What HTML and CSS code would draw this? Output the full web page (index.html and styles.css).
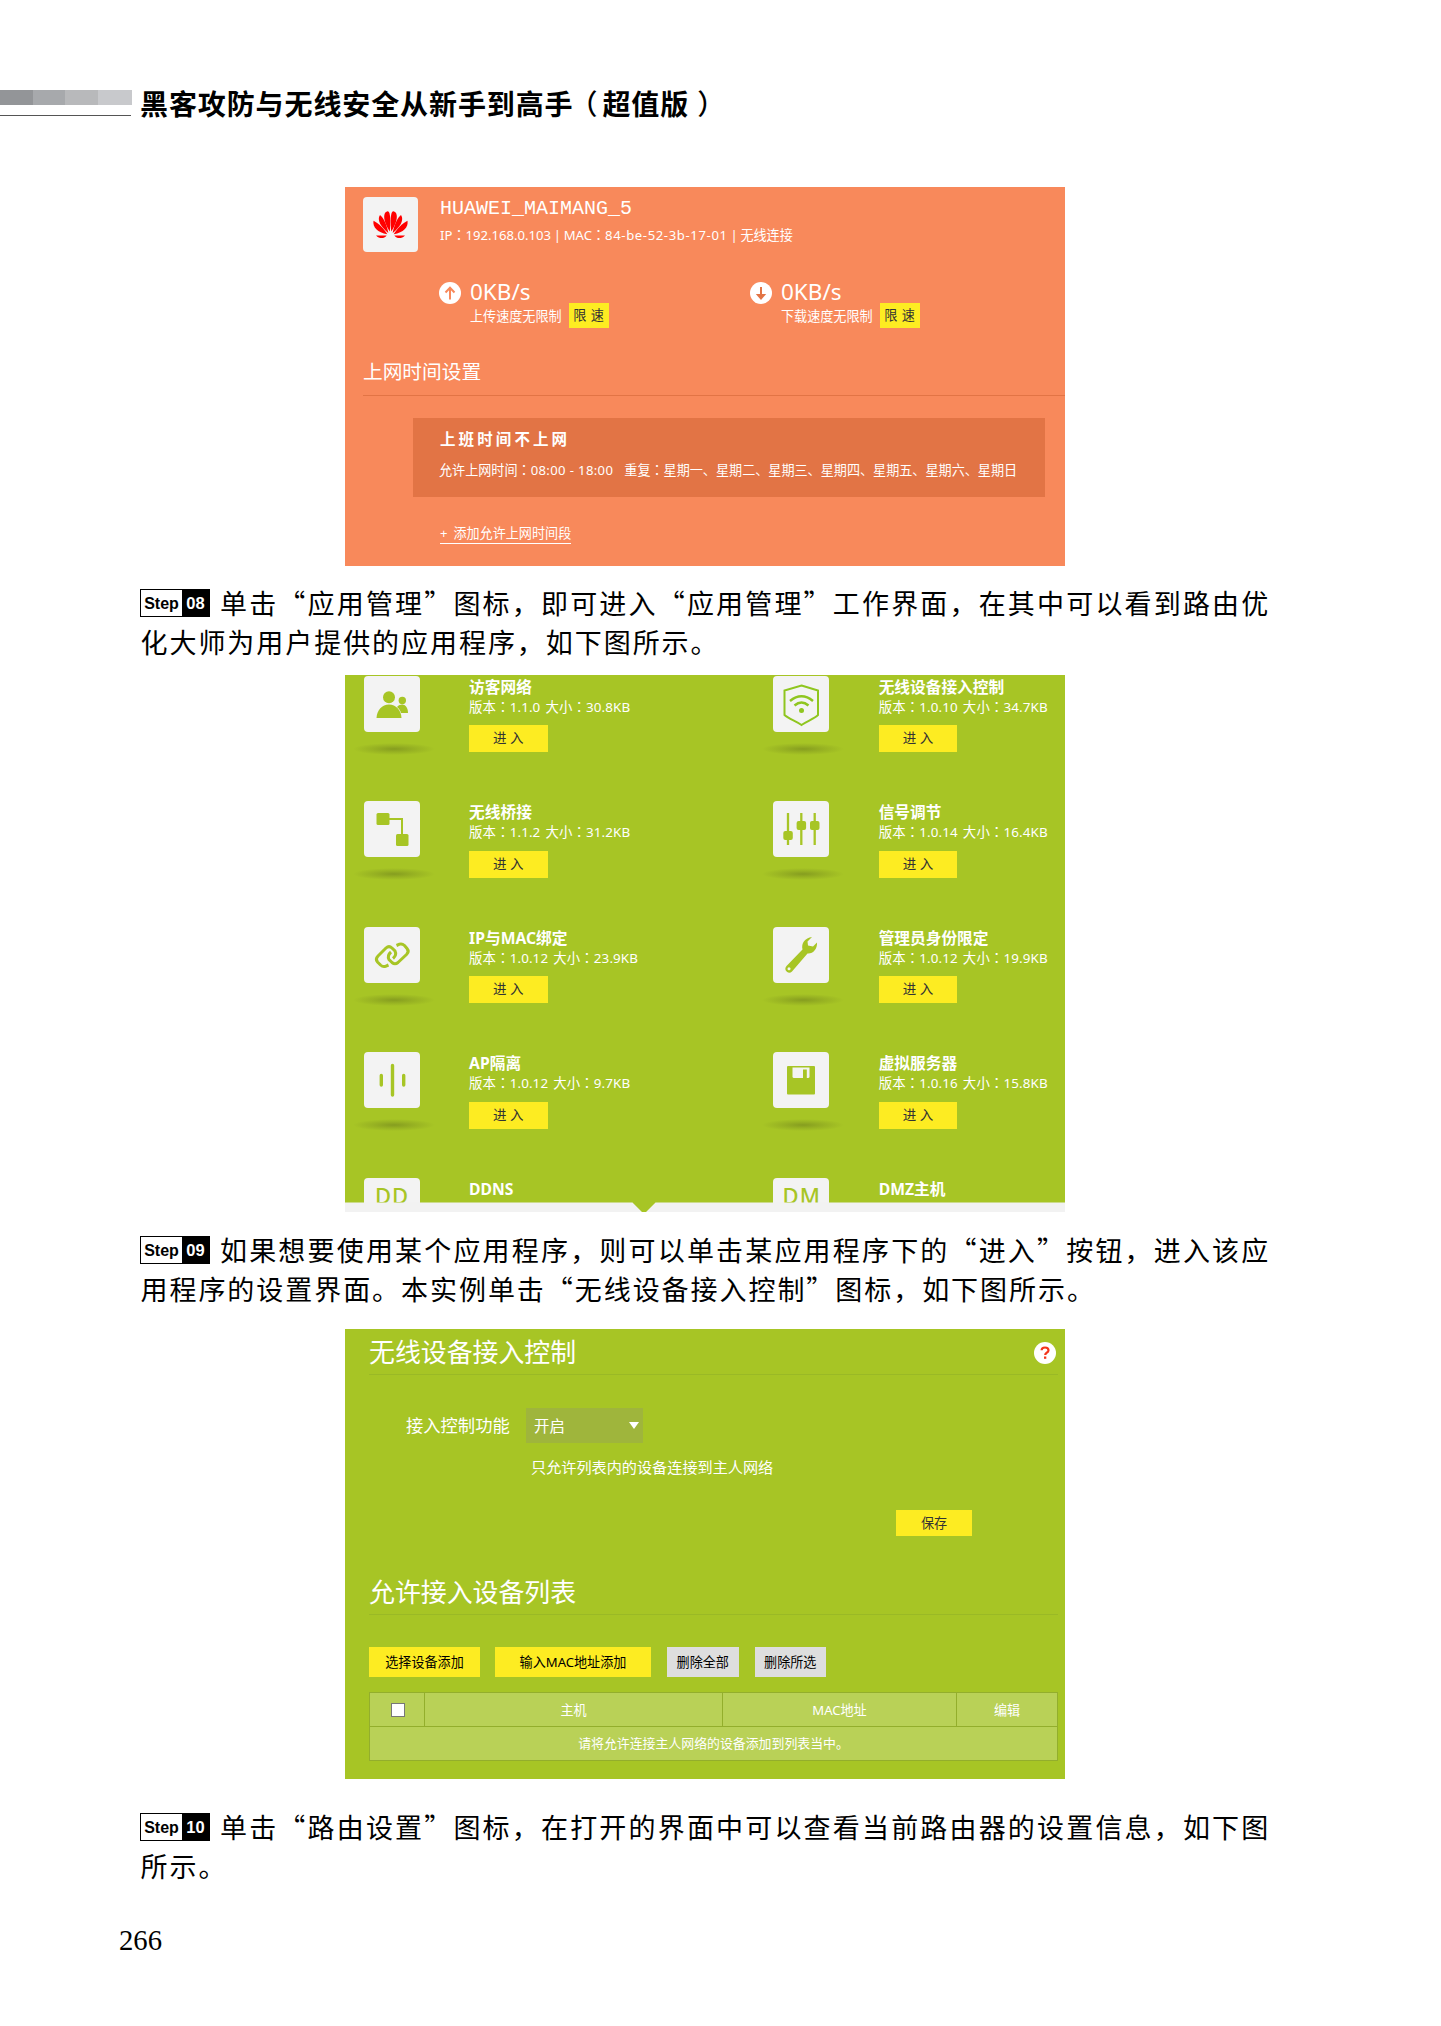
FILE: index.html
```html
<!DOCTYPE html>
<html lang="zh-CN">
<head>
<meta charset="utf-8">
<title>黑客攻防与无线安全从新手到高手（超值版）</title>
<link rel="stylesheet" href="styles.css">
</head>
<body>
<header class="page-head">
  <div class="bars"><div class="blocks"><i></i><i></i><i></i><i></i></div></div>
  <h1>黑客攻防与无线安全从新手到高手<b class="open">（</b>超值版<b class="close">）</b></h1>
</header>

<section class="panel device">
  <div class="device-top">
    <div class="logo">
      <svg width="55" height="55" viewBox="0 0 55 55" fill="#f00">
        <g id="half"><path d="M26.800 34.500C21.500 27 18.500 16 24.500 14.300C28 14 27.500 27 26.800 34.500Z"/><path d="M25.300 36C18 30 13.500 23 17 18C20.500 20.500 24 28 25.300 36Z"/><path d="M24.300 37.300C14.500 35.500 9.500 30.500 10.500 23.800C16 26.500 21 32 24.300 37.300Z"/><path d="M23.600 38.400C21 42 16.500 42 13 38.400Z"/></g>
        <use href="#half" transform="matrix(-1 0 0 1 55 0)"/>
      </svg>
    </div>
    <div>
      <div class="dev-name">HUAWEI_MAIMANG_5</div>
      <div class="dev-info">IP<b class="c">：</b>192.168.0.103 | MAC<b class="c">：</b><span class="mac">84-be-52-3b-17-01</span> | 无线连接</div>
    </div>
  </div>
  <div class="speeds">
    <div class="speed">
      <svg width="22" height="22" viewBox="0 0 22 22"><circle cx="11" cy="11" r="11" fill="#fff"/><path d="M11 17.500V6M6.500 10.500L11 5.800L15.500 10.500" fill="none" stroke="#f8895b" stroke-width="2"/></svg>
      <div><div class="rate">0KB/s</div><div class="limit"><span>上传速度无限制</span><button>限 速</button></div></div>
    </div>
    <div class="speed">
      <svg width="22" height="22" viewBox="0 0 22 22"><circle cx="11" cy="11" r="11" fill="#fff"/><path d="M11 5V13" stroke="#e27445" stroke-width="2"/><path d="M5.800 12H16.200L11 18Z" fill="#e27445"/></svg>
      <div><div class="rate">0KB/s</div><div class="limit"><span>下载速度无限制</span><button>限 速</button></div></div>
    </div>
  </div>
  <h2 class="time-title">上网时间设置</h2>
  <div class="rule-box">
    <h3>上班时间不上网</h3>
    <p>允许上网时间<b class="c">：</b><span class="hours">08:00 - 18:00</span><span class="gap"></span>重复<b class="c">：</b>星期一、星期二、星期三、星期四、星期五、星期六、星期日</p>
  </div>
  <a class="add">+ 添加允许上网时间段</a>
</section>

<div class="para p8">
  <p class="l1"><span class="step"><b>Step</b><i>08</i></span>单击“应用管理”图标，即可进入“应用管理”工作界面，在其中可以看到路由优</p>
  <p>化大师为用户提供的应用程序，如下图所示。</p>
</div>

<section class="panel apps">
  <div class="app-grid">
    <div class="app"><div class="tile"><svg width="56" height="56" viewBox="0 0 56 56" fill="#a7c525"><circle cx="25" cy="21.300" r="6"/><path d="M12.500 42C13 34 18 28.500 25 28.500S37 34 37.500 42Z"/><circle cx="38.300" cy="24.500" r="3.700"/><path d="M33 31C38 26 44 29 44 37H37C36.500 34.500 35 32.500 33 31Z"/></svg></div>
      <div><h3>访客网络</h3><p>版本<b class="c">：</b>1.1.0 大小<b class="c">：</b>30.8KB</p><button>进 入</button></div></div>
    <div class="app"><div class="tile"><svg width="56" height="56" viewBox="0 0 56 56" fill="none" stroke="#8fc61f" stroke-width="2"><path d="M28.500 9.500L45 14.500V39C41 43 34 45 28.500 49C23 45 16 43 11.500 39V14.500Z"/><path d="M17 25Q28.500 15.500 40 25M21.500 29.500Q28.500 23.500 35.500 29.500" stroke-width="2.500"/><circle cx="28.500" cy="34.500" r="2.500" fill="#8fc61f" stroke="none"/></svg></div>
      <div><h3>无线设备接入控制</h3><p>版本<b class="c">：</b>1.0.10 大小<b class="c">：</b>34.7KB</p><button>进 入</button></div></div>

    <div class="app"><div class="tile"><svg width="56" height="56" viewBox="0 0 56 56" fill="#a7c525"><rect x="12.500" y="12" width="13" height="12" rx="1.500"/><rect x="32" y="33" width="12.500" height="12" rx="1.500"/><path d="M25 18H38V34" fill="none" stroke="#a7c525" stroke-width="2"/></svg></div>
      <div><h3>无线桥接</h3><p>版本<b class="c">：</b>1.1.2 大小<b class="c">：</b>31.2KB</p><button>进 入</button></div></div>
    <div class="app"><div class="tile"><svg width="56" height="56" viewBox="0 0 56 56" fill="#a7c525"><path d="M15 12V44M28.300 12V44M41.700 12V44" stroke="#a7c525" stroke-width="2.300"/><rect x="10.300" y="30" width="9.500" height="9" rx="2"/><rect x="23.600" y="20" width="9.500" height="9" rx="2"/><rect x="37" y="20" width="9.500" height="9" rx="2"/></svg></div>
      <div><h3>信号调节</h3><p>版本<b class="c">：</b>1.0.14 大小<b class="c">：</b>16.4KB</p><button>进 入</button></div></div>

    <div class="app"><div class="tile"><svg width="56" height="56" viewBox="0 0 56 56" fill="none" stroke="#a7c525" stroke-width="3"><path d="M24.500 38L21.500 39.300Q19 40.300 16.500 38L13.500 35Q11 32 14 29L22 21Q25 18.300 28 21L31 24Q33 28 29 31.500"/><path d="M32.500 18.500L35.500 17.200Q38 16.200 40.500 18.500L43 21.500Q45.500 24.500 42.500 27.500L34 35.500Q31 38 28 35.500L25 32.500Q23 28.500 27 25"/></svg></div>
      <div><h3>IP与MAC绑定</h3><p>版本<b class="c">：</b>1.0.12 大小<b class="c">：</b>23.9KB</p><button>进 入</button></div></div>
    <div class="app"><div class="tile"><svg width="56" height="56" viewBox="0 0 56 56" fill="#a7c525"><path d="M39 10C32 11 28 16 29.500 22.500L13.500 39C10 43 15.500 48 19 44.500L34.500 26.500C40 27 44.500 22 44 15.500L40 19.500L35 18.500L34.500 14.500Z"/><circle cx="16" cy="41.700" r="1.500" fill="#f3f3f3"/></svg></div>
      <div><h3>管理员身份限定</h3><p>版本<b class="c">：</b>1.0.12 大小<b class="c">：</b>19.9KB</p><button>进 入</button></div></div>

    <div class="app"><div class="tile"><svg width="56" height="56" viewBox="0 0 56 56" fill="none" stroke="#a7c525" stroke-width="3.400" stroke-linecap="round"><path d="M17.300 23.500V33M28.500 13.500V43M39.700 23.500V33"/></svg></div>
      <div><h3>AP隔离</h3><p>版本<b class="c">：</b>1.0.12 大小<b class="c">：</b>9.7KB</p><button>进 入</button></div></div>
    <div class="app"><div class="tile"><svg width="56" height="56" viewBox="0 0 56 56"><rect x="14" y="14" width="28" height="28.500" rx="1" fill="#a7c525"/><path d="M19.500 15.500H36.500V24.500Q36.500 26 35 26H21Q19.500 26 19.500 24.500Z" fill="#f3f3f3"/><rect x="30" y="17.500" width="3.800" height="10" fill="#a7c525"/></svg></div>
      <div><h3>虚拟服务器</h3><p>版本<b class="c">：</b>1.0.16 大小<b class="c">：</b>15.8KB</p><button>进 入</button></div></div>

    <div class="app"><div class="tile letters">DD</div><div><h3>DDNS</h3></div></div>
    <div class="app"><div class="tile letters">DM</div><div><h3>DMZ主机</h3></div></div>
  </div>
  <svg class="strip" width="720" height="10" viewBox="0 0 720 10"><path d="M0 .5H287.500L297 10H0ZM310.500 .5H720V10H301Z" fill="#f2f2f2"/></svg>
</section>

<div class="para p9">
  <p class="l1"><span class="step"><b>Step</b><i>09</i></span>如果想要使用某个应用程序，则可以单击某应用程序下的“进入”按钮，进入该应</p>
  <p>用程序的设置界面。本实例单击“无线设备接入控制”图标，如下图所示。</p>
</div>

<section class="panel access">
  <div class="sec-title"><h2>无线设备接入控制</h2><svg width="22" height="22" viewBox="0 0 22 22"><circle cx="11" cy="11" r="11" fill="#fff"/><path d="M7.600 8.300Q7.600 5.500 11 5.500Q14.500 5.500 14.500 8.200Q14.500 9.700 12.700 10.700Q11.200 11.600 11.200 13" fill="none" stroke="#f4351b" stroke-width="2.200"/><rect x="10" y="14.500" width="2.300" height="2.300" fill="#f4351b"/></svg></div>
  <div class="field"><label>接入控制功能</label><div class="select"><span>开启</span><svg width="10" height="7" viewBox="0 0 10 7"><path d="M0 0H10L5 7Z" fill="#fff"/></svg></div></div>
  <p class="hint">只允许列表内的设备连接到主人网络</p>
  <button class="save">保存</button>
  <div class="sec-title second"><h2>允许接入设备列表</h2></div>
  <div class="actions"><button class="a1">选择设备添加</button><button class="a2">输入MAC地址添加</button><button class="a3">删除全部</button><button class="a3">删除所选</button></div>
  <div class="table">
    <div class="tr"><div><span class="check"></span></div><div>主机</div><div>MAC地址</div><div>编辑</div></div>
    <div class="msg">请将允许连接主人网络的设备添加到列表当中。</div>
  </div>
</section>

<div class="para p10">
  <p class="l1"><span class="step"><b>Step</b><i>10</i></span>单击“路由设置”图标，在打开的界面中可以查看当前路由器的设置信息，如下图</p>
  <p>所示。</p>
</div>
<footer>266</footer>
</body>
</html>
```
FILE: styles.css
```css
* { box-sizing: border-box; margin: 0; padding: 0; }
body { width: 1441px; height: 2026px; background: #fff; color: #000; overflow: hidden; display: flex; flex-direction: column; font-family: "Noto Sans", "Noto Sans CJK SC", sans-serif; font-size: 13.1px; }
button { font: inherit; border: 0; background: #fdec22; color: #333; display: block; white-space: nowrap; text-align: center; }
svg { display: block; flex: none; }
p, h1, h2, h3 { white-space: nowrap; }
.c { font-family: "Noto Sans CJK TC", sans-serif; font-weight: inherit; -webkit-locale: "zh-TW"; line-height: 1; }

.page-head { height: 187px; padding-top: 84px; display: flex; flex: none; }
.bars { width: 132px; height: 32px; margin-top: 6px; margin-right: 8px; }
.bars::after { content: ""; display: block; width: 131px; height: 1px; background: #555; margin-top: 10px; }
.blocks { display: grid; grid-template-columns: 33px 32px 33px 34px; height: 15px; }
.blocks i:nth-child(1) { background: #939598; }
.blocks i:nth-child(2) { background: #a7a9ac; }
.blocks i:nth-child(3) { background: #b8b9bb; }
.blocks i:nth-child(4) { background: #c8c9cc; }
h1 { font: 700 28px/38px "Noto Sans CJK SC", sans-serif; letter-spacing: .9px; }
h1 b { font-weight: 500; }
.open { margin: 0 4px 0 -4px; }
.close { margin-left: 8px; }

.panel { width: 720px; margin-left: 345px; flex: none; color: #fff; overflow: hidden; }
.device { height: 379px; background: #f8895b; }
.device-top { display: flex; gap: 22px; padding: 10px 0 0 18px; height: 95px; }
.logo { width: 55px; height: 55px; background: #f3f3f3; border-radius: 4px; }
.dev-name { font: 20px/24px "Liberation Mono", monospace; }
.dev-info { line-height: 20px; margin-top: 4px; white-space: nowrap; word-spacing: -.6px; }
.mac { letter-spacing: .62px; }
.hours { letter-spacing: .36px; }
.speeds { display: flex; padding-left: 94px; height: 73px; }
.speed { width: 311px; display: flex; gap: 9px; }
.rate { font-size: 22.500px; line-height: 20px; height: 22px; }
.limit { display: flex; align-items: center; margin-top: -1px; height: 25px; }
.limit button { width: 40px; height: 25px; line-height: 25px; margin-left: 7px; word-spacing: 1px; }
.time-title { font-weight: 400; font-size: 19.700px; line-height: 34px; height: 41px; margin-left: 18px; border-bottom: 1px solid #e27445; }
.rule-box { margin: 22px 20px 0 68px; height: 79px; background: #e27445; padding: 10px 0 0 27px; }
.rule-box h3 { font-size: 15.500px; line-height: 22px; letter-spacing: 3.100px; }
.rule-box p { line-height: 20px; margin: 10px 0 0 -1px; }
.gap { display: inline-block; width: 11px; }
.add { display: inline-block; margin: 26px 0 0 95px; height: 21px; line-height: 20px; border-bottom: 1px solid #fff; word-spacing: 2.500px; }

.para { font: 27px/40px "Noto Sans CJK SC", sans-serif; flex: none; padding-left: 140px; }
.para p { height: 40px; line-height: 39px; letter-spacing: 1.950px; padding-left: .5px; }
.para .l1 { display: flex; align-items: center; letter-spacing: 2.180px; padding-left: 0; }
.p8 { margin-top: 16px; height: 93px; }
.p9 { margin-top: 17px; height: 100px; }
.p10 { margin-top: 27px; height: 81px; }
.step { width: 70px; height: 28px; margin: 1px 10px 0 0; border: 1px solid #000; display: flex; flex: none; font: 700 16.500px/28px "Liberation Sans", sans-serif; letter-spacing: 0; text-align: center; }
.step b { width: 41px; font-size: 16px; }
.step i { flex: 1; background: #000; color: #fff; font-style: normal; line-height: 27px; }

.apps { height: 537px; background: #a7c525; position: relative; }
.app-grid { display: grid; grid-template-columns: 409.600px 300px; grid-auto-rows: 125.600px; padding: .5px 0 0 18.600px; }
.app { display: flex; gap: 49.500px; }
.tile { width: 56px; height: 56px; background: #f3f3f3; border-radius: 4px; position: relative; flex: none; }
.tile::after { content: ""; position: absolute; left: -11px; top: 67px; width: 82px; height: 12px; background: radial-gradient(closest-side, rgba(70, 80, 20, .34), rgba(70, 80, 20, .16) 50%, rgba(70, 80, 20, 0)); }
.app h3 { font-size: 15.700px; line-height: 24px; margin-top: -1px; }
.app p { font-size: 13.400px; line-height: 18px; height: 18px; margin-top: -1px; letter-spacing: .12px; word-spacing: 1.500px; }
.app button { width: 78.500px; height: 27px; line-height: 27px; margin-top: 9.700px; font-size: 13.500px; }
.letters { color: #a7c525; font-size: 22px; font-weight: 500; line-height: 34px; text-align: center; letter-spacing: 1px; padding-left: 1px; }
.strip { position: absolute; left: 0; bottom: 0; }

.access { height: 450px; background: #a7c525; padding: 0 7px 0 24px; }
.sec-title { height: 46px; border-bottom: 1px solid #9ab926; display: flex; justify-content: space-between; padding: 12.500px 2px 0 0; }
.sec-title h2 { font-weight: 400; font-size: 25.900px; line-height: 34px; margin-top: -7px; }
.field { display: flex; margin: 33px 0 0 37px; height: 35px; line-height: 35px; font-size: 17.300px; }
.field label { width: 120px; }
.select { width: 117px; background: #9fb53c; display: flex; justify-content: space-between; align-items: center; padding: 0 4px 0 8px; font-size: 15.400px; }
.select span { padding-top: 2px; }
.hint { font-size: 15.150px; line-height: 24px; margin: 12px 0 0 162px; }
.save { width: 76px; height: 26px; line-height: 26px; margin: 31px 0 0 527px; }
.second { margin-top: 33px; }
.actions { display: flex; margin-top: 32px; }
.actions button { height: 30px; line-height: 29px; color: #000; }
.actions .a1 { width: 111px; margin-right: 15px; }
.actions .a2 { width: 156px; margin-right: 16px; }
.actions .a3 { width: 71.500px; margin-right: 16px; background: #dedede; }
.table { margin-top: 15px; border: 1px solid #93ae2c; background: #b9d157; height: 69px; text-align: center; }
.tr { display: grid; grid-template-columns: 54px 298px 234px 1fr; height: 34px; line-height: 34px; border-bottom: 1px solid #93ae2c; }
.tr > div + div { border-left: 1px solid #93ae2c; }
.check { display: block; width: 14px; height: 14px; background: #fff; border: 1px solid #777; margin: 10px 0 0 21px; }
.msg { line-height: 33px; font-size: 12.900px; }

footer { font: 28.700px/34px "Liberation Serif", serif; margin: 36px 0 0 119px; }
```
